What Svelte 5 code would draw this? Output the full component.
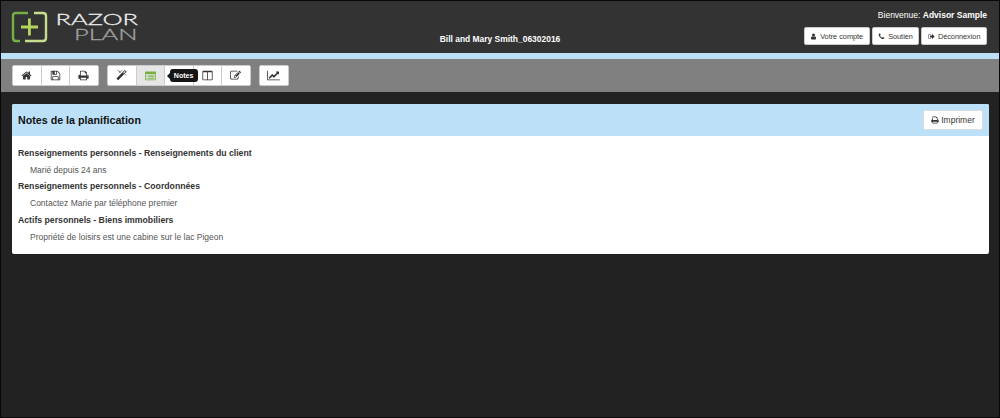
<script lang="ts">
	type Tool = { name: string; icon: string; active?: boolean };

	const icons: Record<string, string> = {
		home: 'M1472 992v480q0 26-19 45t-45 19h-384v-384h-256v384h-384q-26 0-45-19t-19-45v-480q0-1 .5-3t.5-3l575-474 575 474q1 2 1 6zm223-69l-62 74q-8 9-21 11h-3q-13 0-21-7l-692-577-692 577q-12 8-24 7-13-2-21-11l-62-74q-8-10-7-23.5t11-21.5l719-599q32-26 76-26t76 26l244 204v-195q0-14 9-23t23-9h192q14 0 23 9t9 23v408l219 182q10 8 11 21.5t-7 23.5z',
		save: 'M512 1536h768v-384h-768v384zm896 0h128v-896q0-14-10-38.5t-20-34.5l-281-281q-10-10-34-20t-39-10v416q0 40-28 68t-68 28h-576q-40 0-68-28t-28-68v-416h-128v1280h128v-416q0-40 28-68t68-28h832q40 0 68 28t28 68v416zm-384-928v-320q0-13-9.5-22.5t-22.5-9.5h-192q-13 0-22.5 9.5t-9.5 22.5v320q0 13 9.5 22.5t22.5 9.5h192q13 0 22.5-9.5t9.5-22.5zm640 32v928q0 40-28 68t-68 28h-1344q-40 0-68-28t-28-68v-1344q0-40 28-68t68-28h928q40 0 88 20t76 48l280 280q28 28 48 76t20 88z',
		print: 'M448 1536h896v-256h-896v256zm0-640h896v-384h-160q-40 0-68-28t-28-68v-160h-640v640zm1152 64q0-26-19-45t-45-19-45 19-19 45 19 45 45 19 45-19 19-45zm128 0v416q0 13-9.5 22.5t-22.5 9.5h-224v160q0 40-28 68t-68 28h-960q-40 0-68-28t-28-68v-160h-224q-13 0-22.5-9.5t-9.5-22.5v-416q0-79 56.5-135.5t135.5-56.5h64v-544q0-40 28-68t68-28h672q40 0 88 20t76 48l152 152q28 28 48 76t20 88v256h64q79 0 135.5 56.5t56.5 135.5z',
		magic: 'M1254 581l293-293-107-107-293 293zm447-293q0 27-18 45l-1286 1286q-18 18-45 18t-45-18l-198-198q-18-18-18-45t18-45l1286-1286q18-18 45-18t45 18l198 198q18 18 18 45zm-1351-190l98 30-98 30-30 98-30-98-98-30 98-30 30-98zm350 162l196 60-196 60-60 196-60-196-196-60 196-60 60-196zm930 478l98 30-98 30-30 98-30-98-98-30 98-30 30-98zm-640-640l98 30-98 30-30 98-30-98-98-30 98-30 30-98z',
		list: 'M160 256h1472q160 0 160 160v1088q0 160-160 160h-1472q-160 0-160-160v-1088q0-160 160-160zm0 384q-32 0-32 32v832q0 32 32 32h1472q32 0 32-32v-832q0-32-32-32zM256 768h128v128h-128zM512 768h1024v128h-1024zM256 1024h128v128h-128zM512 1024h1024v128h-1024zM256 1280h128v128h-128zM512 1280h1024v128h-1024z',
		columns: 'M224 128h1344q160 0 160 160v1216q0 160-160 160h-1344q-160 0-160-160v-1216q0-160 160-160zm-32 256v1120q0 32 32 32h608v-1152zm768 0v1152h608q32 0 32-32v-1120z',
		edit: 'M888 1184l116-116-152-152-116 116v56h96v96h56zm440-720q-16-16-33 1l-350 350q-17 17-1 33t33-1l350-350q17-17 1-33zm80 594v190q0 119-84.5 203.5t-203.5 84.5h-832q-119 0-203.5-84.5t-84.5-203.5v-832q0-119 84.5-203.5t203.5-84.5h832q63 0 117 25 15 7 18 23 3 17-9 29l-49 49q-14 14-32 8-23-6-45-6h-832q-66 0-113 47t-47 113v832q0 66 47 113t113 47h832q66 0 113-47t47-113v-126q0-13 9-22l64-64q15-15 35-7t20 29zm-96-738l288 288-672 672h-288v-288zm444 132l-92 92-288-288 92-92q28-28 68-28t68 28l152 152q28 28 28 68t-28 68z',
		chart: 'M-128 128h128v1408h1920v128h-2048zM1792 288v435q0 21-19.5 29.5t-35.5-7.5l-121-121-633 633q-10 10-23 10t-23-10l-233-233-416 416-192-192 585-585q10-10 23-10t23 10l233 233 464-464-121-121q-16-16-7.5-35.5t29.5-19.5h435q14 0 23 9t9 23z',
		user: 'M1536 1399q0 109-62.5 187t-150.5 78h-854q-88 0-150.5-78t-62.5-187q0-85 8.5-160.5t31.5-152 58.5-131 94-89 134.5-34.5q131 128 313 128t313-128q76 0 134.5 34.5t94 89 58.5 131 31.5 152 8.5 160.5zm-256-887q0 159-112.5 271.5t-271.5 112.5-271.5-112.5-112.5-271.5 112.5-271.5 271.5-112.5 271.5 112.5 112.5 271.5z',
		phone: 'M1600 1240q0 27-10 70.5t-21 68.5q-21 50-122 106-94 51-186 51-27 0-53-3.5t-57.5-12.5-47-14.5-55.5-20.5-49-18q-98-35-175-83-127-79-264-216t-216-264q-48-77-83-175-3-9-18-49t-20.5-55.5-14.5-47-12.5-57.5-3.5-53q0-92 51-186 56-101 106-122 25-11 68.5-21t70.5-10q14 0 21 3 18 6 53 76 11 19 30 54t35 63.5 31 53.5q3 4 17.5 25t21.5 35.5 7 28.5q0 20-28.5 50t-62 55-62 53-28.5 46q0 9 5 22.5t8.5 20.5 14 24 11.5 19q76 137 174 235t235 174q2 1 19 11.5t24 14 20.5 8.5 22.5 5q18 0 46-28.5t53-62 55-62 50-28.5q14 0 28.5 7t35.5 21.5 25 17.5q25 15 53.5 31t63.5 35 54 30q70 35 76 53 3 7 3 21z',
		logout: 'M704 1440v96h-320q-288 0-288-288v-704q0-288 288-288h320v128h-320q-160 0-160 160v704q0 160 160 160h320zM1696 896l-565 565q-19 19-45 19t-45-19-19-45v-288h-448q-64 0-64-64v-336q0-64 64-64h448v-288q0-26 19-45t45-19 45 19z'
	};

	const groups: Tool[][] = [
		[
			{ name: 'Accueil', icon: 'home' },
			{ name: 'Enregistrer', icon: 'save' },
			{ name: 'Imprimer', icon: 'print' }
		],
		[
			{ name: 'Assistant', icon: 'magic' },
			{ name: 'Notes', icon: 'list', active: true },
			{ name: 'Livre', icon: 'columns' },
			{ name: 'Colonnes', icon: 'columns' },
			{ name: 'Modifier', icon: 'edit' }
		],
		[{ name: 'Graphique', icon: 'chart' }]
	];

	const links = [
		{ label: 'Votre compte', icon: 'user' },
		{ label: 'Soutien', icon: 'phone' },
		{ label: 'Déconnexion', icon: 'logout' }
	];

	const notes = [
		{ title: 'Renseignements personnels - Renseignements du client', text: 'Marié depuis 24 ans' },
		{ title: 'Renseignements personnels - Coordonnées', text: 'Contactez Marie par téléphone premier' },
		{ title: 'Actifs personnels - Biens immobiliers', text: 'Propriété de loisirs est une cabine sur le lac Pigeon' }
	];
</script>

{#snippet icon(name: string)}
	<svg class="icon" viewBox="0 0 1792 1792" aria-hidden="true">
		<path d={icons[name]} fill-rule={name === 'list' || name === 'columns' ? 'evenodd' : 'nonzero'} />
	</svg>
{/snippet}

<div class="page">
	<header>
		<svg class="logo" viewBox="0 0 130 36" role="img" aria-label="Razor Plan">
			<g fill="none" stroke-width="2.4">
				<path d="M17 3H5Q2 3 2 6V28Q2 31 5 31H9" stroke="#76b043" />
				<path d="M14 31H32Q35 31 35 28V6Q35 3 32 3H23" stroke="#c5de8b" />
				<path d="M18.4 8.500V25.500M10 17H27" stroke="#b4d55b" stroke-width="2.800" />
			</g>
			<text x="44.500" y="14.500" textLength="82.500" lengthAdjust="spacingAndGlyphs" fill="#eee" stroke="#eee">RAZOR</text>
			<text x="63" y="30" textLength="63.500" lengthAdjust="spacingAndGlyphs" fill="#a2a2a2" stroke="#a2a2a2">PLAN</text>
		</svg>
		<strong class="plan">Bill and Mary Smith_06302016</strong>
		<div class="account">
			<p>Bienvenue: <strong>Advisor Sample</strong></p>
			<nav>
				{#each links as link}
					<button>{@render icon(link.icon)}<span>{link.label}</span></button>
				{/each}
			</nav>
		</div>
	</header>

	<div class="toolbar">
		{#each groups as group}
			<div class="group">
				{#each group as tool}
					<button class:active={tool.active} aria-label={tool.name}>
						{@render icon(tool.icon)}
						{#if tool.active}<span class="tooltip">{tool.name}</span>{/if}
					</button>
				{/each}
			</div>
		{/each}
	</div>

	<main>
		<div class="panel-heading">
			<h1>Notes de la planification</h1>
			<button>{@render icon('print')}<span>Imprimer</span></button>
		</div>
		<dl>
			{#each notes as note}
				<dt><span>{note.title}</span></dt>
				<dd><span>{note.text}</span></dd>
			{/each}
		</dl>
	</main>
</div>

<style>
	:global(body) {
		margin: 0;
	}

	.page {
		box-sizing: border-box;
		height: 418px;
		border: 1px solid #080808;
		background: #222;
		font-family: 'Liberation Sans', Arial, sans-serif;
		font-size: 8.5px;
		color: #333;
	}

	button {
		display: flex;
		align-items: center;
		justify-content: center;
		box-sizing: border-box;
		padding: 0;
		border: 1px solid #ccc;
		border-radius: 2px;
		background: #fff;
		color: #333;
		font: inherit;
	}

	.icon {
		width: 11px;
		height: 11px;
		fill: currentColor;
		overflow: visible;
	}

	header {
		display: grid;
		grid-template-columns: 1fr auto 1fr;
		height: 52px;
		padding: 0 12px 0 10px;
		background: #333;
		color: #fff;
	}

	.logo {
		width: 130px;
		height: 36px;
		margin-top: 9px;
	}

	.logo text {
		font-family: Lato, sans-serif;
		font-size: 16.5px;
		font-weight: 300;
		stroke-width: 0.3px;
	}

	.plan {
		align-self: end;
		margin: 0 0 8px 2px;
		font-size: 8.45px;
		line-height: 12px;
	}

	.account p {
		margin: 8px 0 6px;
		line-height: 12px;
		text-align: right;
	}

	nav {
		display: flex;
		justify-content: flex-end;
		gap: 2px;
	}

	nav button {
		height: 18px;
		padding: 0 5.5px;
		gap: 3px;
		font-size: 7.3px;
	}

	nav .icon {
		width: 7px;
		height: 7px;
	}

	.toolbar {
		display: flex;
		gap: 8.6px;
		box-sizing: border-box;
		height: 39px;
		padding: 6px 11px 0;
		border-top: 6px solid #bce0f7;
		background: #808080;
	}

	.group {
		display: flex;
		height: 21px;
	}

	.group button {
		position: relative;
		width: 29.5px;
		border-radius: 0;
	}

	.group button + button {
		margin-left: -1px;
	}

	.group button:first-child {
		border-radius: 2px 0 0 2px;
	}

	.group button:last-child {
		border-radius: 0 2px 2px 0;
	}

	.group button:only-child {
		border-radius: 2px;
	}

	.group .active {
		z-index: 1;
		background: #e6e6e6;
		color: #76b043;
	}

	.tooltip {
		position: absolute;
		top: 3px;
		left: 33px;
		width: 28px;
		border-radius: 3px;
		background: #151515;
		color: #fff;
		font-size: 7px;
		font-weight: bold;
		line-height: 13px;
		text-align: center;
	}

	.tooltip::before {
		content: '';
		position: absolute;
		top: 4px;
		left: -3px;
		border: solid transparent;
		border-width: 3px 3px 3px 0;
		border-right-color: #151515;
	}

	main {
		box-sizing: border-box;
		height: 150px;
		margin: 12px 10px 0 11px;
		border-radius: 2px;
		background: #fff;
		overflow: hidden;
	}

	.panel-heading {
		display: flex;
		align-items: center;
		justify-content: space-between;
		height: 32px;
		padding: 0 6px;
		background: #bce0f7;
	}

	h1 {
		margin: 0;
		font-size: 10.7px;
		color: #111;
	}

	.panel-heading button {
		width: 60px;
		height: 20px;
		gap: 2px;
		border-color: #ddd;
	}

	.panel-heading .icon {
		width: 8px;
		height: 8px;
	}

	dl {
		margin: 0;
		padding: 9px 6px;
		line-height: 16.7px;
	}

	dt {
		font-size: 8.7px;
		font-weight: bold;
	}

	dd {
		margin: 0 0 0 12px;
		color: #555;
	}
</style>
